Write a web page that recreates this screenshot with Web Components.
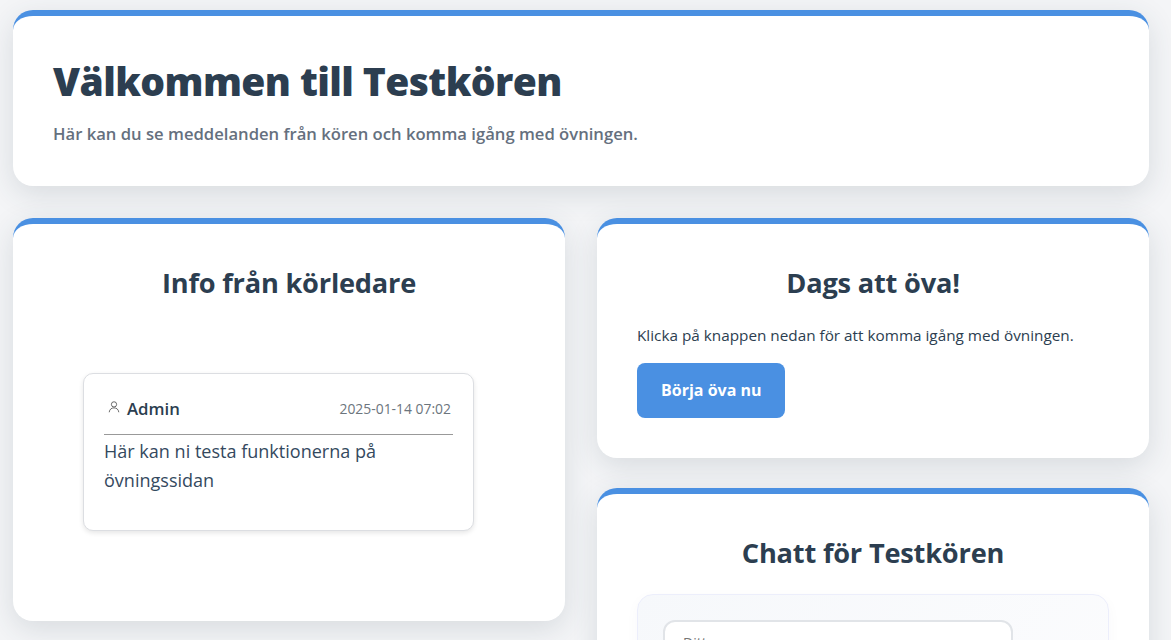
<!DOCTYPE html>
<html lang="sv"><head><meta charset="utf-8"><title>Testkören</title>
<style>
html,body{margin:0;padding:0;background:#f4f5f7;height:640px;overflow:hidden}
body{font-family:"Open Sans","Noto Sans",sans-serif;color:#2c3e50}
</style></head><body>
<template id="t-page"><style>
:host{display:block;padding:10px 22px 0 13px;box-sizing:border-box}
.col{display:flex;flex-direction:column;gap:32px}
</style><div class="col"><slot></slot></div></template>
<template id="t-grid"><style>
:host{display:grid;grid-template-columns:552px 552px;gap:32px;align-items:start}
::slotted(.stack){display:flex;flex-direction:column;gap:30px}
</style><slot></slot></template>
<template id="t-card"><style>
:host{display:block;box-sizing:border-box;background:#fff;border-top:6px solid #4a90e2;border-radius:20px;padding:40px;box-shadow:0 8px 30px rgba(44,62,80,.14)}
</style><slot></slot></template>
<template id="t-head"><style>
:host{display:block;text-align:center;margin:1px 0 0;color:#2c3e50;font-size:27.2px;font-weight:700;line-height:36px;letter-spacing:-.2px}
</style><slot></slot></template>
<template id="t-msg"><style>
:host{display:block;box-sizing:border-box;width:391px;height:158px;margin:72px 0 0 30px;padding:20px;background:#fff;border:1px solid #dcdee2;border-radius:10px;box-shadow:0 2px 5px rgba(0,0,0,.1)}
.top{display:flex;justify-content:space-between;align-items:flex-start;border-bottom:1px solid #999;padding:0 2px 0 3px;box-sizing:border-box;height:41px;line-height:30px}
.who{display:flex;align-items:center;gap:6px;font-size:16.8px;font-weight:600;color:#2c3e50}
svg{width:14px;height:14px;margin-bottom:4px}
.when{font-size:13.9px;color:#6c757d}
.body{font-size:18.05px;line-height:29px;color:#34495e;margin-top:2px}
</style><div class="top"><span class="who"><svg viewBox="0 0 16 16" fill="none" stroke="#444" stroke-width=".9"><circle cx="8" cy="5" r="3"/><path d="M2.5 14c.5-3.500 2.700-5 5.500-5s5 1.500 5.500 5"/></svg><slot name="who"></slot></span><span class="when"><slot name="when"></slot></span></div><div class="body"><slot></slot></div></template>
<template id="t-btn"><style>
:host{display:inline-block;box-sizing:border-box;background:#4a90e2;color:#fff;border-radius:8px;padding:0 24px;height:55px;line-height:55px;font-size:16px;font-weight:700}
</style><slot></slot></template>
<template id="t-chat"><style>
:host{display:block;box-sizing:border-box;margin-top:23px;background:linear-gradient(135deg,#f6f8fb,#fdfdfe);border:1px solid #eceefb;border-radius:16px;padding:25px;height:300px;box-shadow:0 4px 14px rgba(44,62,80,.03)}
.input{box-sizing:border-box;width:350px;height:60px;background:#fff;border:2px solid #e1e4e8;border-radius:12px;padding:11px 18px;font-size:14px;color:#757575}
</style><div class="input"><slot></slot></div></template>
<app-page>
 <app-card style="height:176px">
  <h1 style="margin:-1px 0 15px;font-size:39px;line-height:52px;font-weight:800;color:#2c3e50;letter-spacing:-.6px">Välkommen till Testkören</h1>
  <p style="margin:0;font-size:16.65px;font-weight:600;color:#65707e">Här kan du se meddelanden från kören och komma igång med övningen.</p>
 </app-card>
 <app-grid>
  <app-card style="height:403px">
   <card-head>Info från körledare</card-head>
   <msg-card><span slot="who">Admin</span><span slot="when">2025-01-14 07:02</span>Här kan ni testa funktionerna på övningssidan</msg-card>
  </app-card>
  <div class="stack">
   <app-card style="height:240px">
    <card-head>Dags att öva!</card-head>
    <p style="margin:23px 0 17px;font-size:15.3px;line-height:22px;color:#2c3e50">Klicka på knappen nedan för att komma igång med övningen.</p>
    <app-btn>Börja öva nu</app-btn>
   </app-card>
   <app-card style="height:500px">
    <card-head>Chatt för Testkören</card-head>
    <chat-box>Ditt namn</chat-box>
   </app-card>
  </div>
 </app-grid>
</app-page>
<script>
const def=(n,t)=>customElements.define(n,class extends HTMLElement{constructor(){super();this.attachShadow({mode:"open"}).appendChild(document.getElementById(t).content.cloneNode(true));}});
def("app-page","t-page");def("app-grid","t-grid");def("app-card","t-card");def("card-head","t-head");def("msg-card","t-msg");def("app-btn","t-btn");def("chat-box","t-chat");
</script>
</body></html>
